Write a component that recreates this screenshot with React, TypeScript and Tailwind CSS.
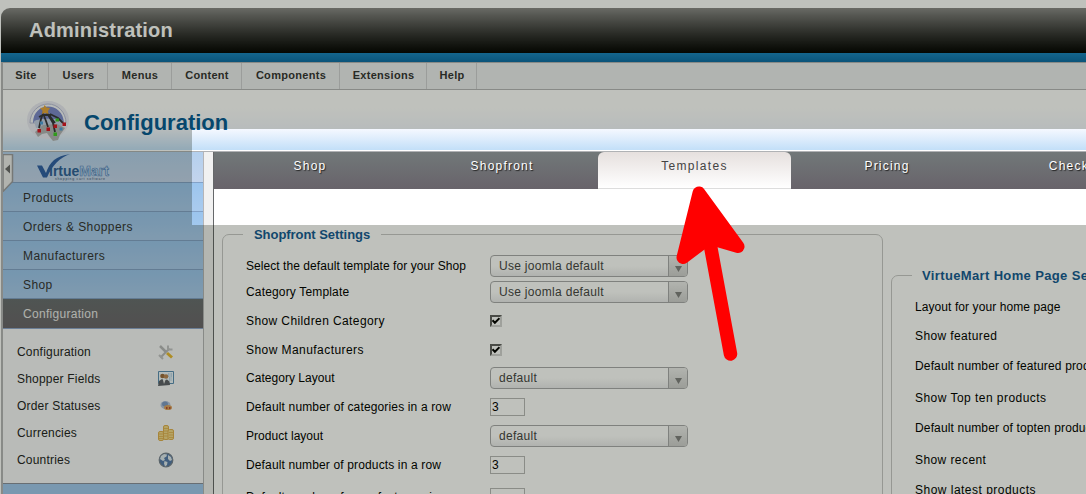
import React from "react";

type Field = { label: string; cls: string; h: string; kind?: "select" | "check" | "input"; value?: string };

const menu = [
  { t: "Site", w: "w-[46px]" },
  { t: "Users", w: "w-[59px]" },
  { t: "Menus", w: "w-[64px]" },
  { t: "Content", w: "w-[70px]" },
  { t: "Components", w: "w-[98px]" },
  { t: "Extensions", w: "w-[87px]" },
  { t: "Help", w: "w-[50px]" },
];

const nav = ["Products", "Orders & Shoppers", "Manufacturers", "Shop"];

const tabs = ["Shop", "Shopfront", "Templates", "Pricing", "Checkout"];

const left: Field[] = [
  { label: "Select the default template for your Shop", cls: "tracking-[0.06px]", h: "h-[26px]", kind: "select", value: "Use joomla default" },
  { label: "Category Template", cls: "tracking-[0.16px]", h: "h-[26px]", kind: "select", value: "Use joomla default" },
  { label: "Show Children Category", cls: "tracking-[0.4px]", h: "h-[32px]", kind: "check" },
  { label: "Show Manufacturers", cls: "tracking-[0.44px]", h: "h-[26px]", kind: "check" },
  { label: "Category Layout", cls: "tracking-[0.03px]", h: "h-[30px]", kind: "select", value: "default" },
  { label: "Default number of categories in a row", cls: "tracking-[0.15px]", h: "h-[28px]", kind: "input", value: "3" },
  { label: "Product layout", cls: "tracking-[0.03px]", h: "h-[30px]", kind: "select", value: "default" },
  { label: "Default number of products in a row", cls: "tracking-[0.14px]", h: "h-[28px]", kind: "input", value: "3" },
  { label: "Default number of manufacturers in a row", cls: "tracking-[0.14px]", h: "h-[36px]", kind: "input" },
];

const right: Field[] = [
  { label: "Layout for your home page", cls: "tracking-[0.08px]", h: "h-[28px]" },
  { label: "Show featured", cls: "tracking-[0.38px]", h: "h-[30px]" },
  { label: "Default number of featured products", cls: "tracking-[0.15px]", h: "h-[30px]" },
  { label: "Show Top ten products", cls: "tracking-[0.46px]", h: "h-[34px]" },
  { label: "Default number of topten products", cls: "tracking-[0.15px]", h: "h-[26px]" },
  { label: "Show recent", cls: "tracking-[0.42px]", h: "h-[38px]" },
  { label: "Show latest products", cls: "tracking-[0.48px]", h: "h-[22px]" },
];

function Control({ f }: { f: Field }) {
  if (f.kind === "select")
    return (
      <div className="flex h-[22px] w-[198px] overflow-hidden rounded-[4px] border border-[#a9a9ab] bg-linear-to-b from-white from-50% to-[#ececee]">
        <span className="flex-1 pl-2 text-[12px] leading-[20px] tracking-[0.3px] text-[#444]">{f.value}</span>
        <span className="flex w-[19px] items-center justify-center border-l border-[#a9a9ab] bg-linear-to-b from-[#ededed] to-[#cfcfcf] pt-[5px]">
          <svg width="7" height="6"><path d="M0 0h7L3.5 6z" fill="#808080" /></svg>
        </span>
      </div>
    );
  if (f.kind === "check")
    return (
      <div className="flex size-[12px] items-center justify-center border-2 border-t-[#606060] border-r-[#d4d4d4] border-b-[#d4d4d4] border-l-[#606060]">
        <svg width="8" height="8" className="shrink-0"><path d="M0.5 3.2l2.4 2.6L7.5 1.2" fill="none" stroke="#000" strokeWidth="2" /></svg>
      </div>
    );
  return <div className="h-[18px] w-[35px] border border-[#b8b8b8] pl-px text-[12px] leading-[16px] text-black">{f.value}</div>;
}

function Rows({ fields }: { fields: Field[] }) {
  return (
    <>
      {fields.map((f) => (
        <div key={f.label} className={`flex items-center whitespace-nowrap ${f.h}`}>
          <span className={`w-[244px] shrink-0 text-[12px] leading-4 text-black ${f.cls}`}>{f.label}</span>
          {f.kind && <Control f={f} />}
        </div>
      ))}
    </>
  );
}

function Emblem() {
  return (
    <svg width="44" height="44" viewBox="0 0 44 44" className="shrink-0">
      <ellipse cx="22" cy="21" rx="21" ry="19" fill="#e9e9f4" />
      <path d="M4 24a18 19 0 0 1 36 0z" fill="#f6f7fb" stroke="#b9bdd8" strokeWidth="1" />
      <path d="M7 24C7 2 37 2 38 24L32 20 12 21z" fill="#7c88cc" />
      <path d="M8 22c6-3 24-3 29 0l-1 6-26 1z" fill="#c3cfe6" />
      <path d="M9 33l3 5 4-3 5-1 2 3 4 5 5-1 2-5 5-7-8-4-14 1z" fill="#b2b4b6" />
      <path d="M18 12l-3 8-2 9M18 17l2 5 2 6M21 14l6 10 2 9M23 16l6 8M24 15l8 4 5 5M13 18l4-2h8" stroke="#35363c" strokeWidth="1.800" fill="none" />
      <path d="M18.500 6l2 2.500 3.500.5-2 3 .5 3-3.500-1-3 1 .5-3.500-2.500-2.500 3.500-.5z" fill="#e5a53a" />
      <path d="M11.500 30h3.500v3.500h-3.500zM20.500 28.500H24V32h-3.500zM27.500 25.500H31V29h-3.500zM36.500 23.500H40V27h-3.500z" fill="#dc1424" />
      <path d="M29.500 19.500H33v3h-3.500zM27.500 33.500h3.500V37h-3.500z" fill="#3fca26" />
      <path d="M14 22.500h3v3h-3zM33.500 28.500h3v3h-3z" fill="#4d9edb" />
    </svg>
  );
}

function Logo() {
  return (
    <svg width="78" height="28" viewBox="0 0 78 28" fontFamily="'Liberation Sans',Arial,sans-serif" fontWeight="bold">
      <path d="M0 11.500h5L9 19C12.500 8.500 19 1.500 33 .3 23 3.300 15 11.500 10 23.500H6z" fill="#2f5fa6" />
      <text x="12" y="22" fontSize="14">
        <tspan fill="#2f6099">irtue</tspan>
        <tspan fill="#bcd6f4" stroke="#4f7fb8" strokeWidth=".6">Mart</tspan>
      </text>
      <text x="18" y="26.300" fontSize="3.500" fontWeight="normal" textLength="50" fill="#3d5273">shopping cart software</text>
    </svg>
  );
}

function ToolsIcon() {
  return (
    <svg width="16" height="16" viewBox="0 0 16 16" fill="none">
      <path d="M2.500 13.500l9-9" stroke="#b9b9bc" strokeWidth="2" />
      <path d="M10 1.500v4h4.500M1 11l4 4" stroke="#c2c2c5" strokeWidth="2" />
      <path d="M2 2l6 6" stroke="#b8b8ba" strokeWidth="2.500" />
      <path d="M9 9l5 4.500" stroke="#e8b932" strokeWidth="3" />
    </svg>
  );
}

function FieldsIcon() {
  return (
    <svg width="16" height="16" viewBox="0 0 16 16">
      <path d="M.5.5h15v12H.5z" fill="#eef6fb" stroke="#5c8db4" />
      <path d="M10 3h4M10 5h4M11 7h3M11 9h3" stroke="#8fb6d8" strokeDasharray="1.500 1" />
      <circle cx="4.500" cy="5" r="2.300" fill="#9a6a3d" />
      <circle cx="8" cy="5.500" r="2.300" fill="#b98554" />
      <path d="M0 15l1-5 3-2 2 1.500 3-1 2.500 2 .5 3.500z" fill="#5d6069" />
      <path d="M5 9l1 4 1.500-4z" fill="#eee" />
    </svg>
  );
}

function StatusIcon() {
  return (
    <svg width="16" height="16" viewBox="0 0 16 16">
      <ellipse cx="7.500" cy="7" rx="5" ry="4" fill="#b4c4e0" />
      <ellipse cx="7" cy="6" rx="3" ry="2.500" fill="#7f9bc6" />
      <ellipse cx="10" cy="9.500" rx="4" ry="2.600" fill="#dda15f" />
      <path d="M8 9h1.500v2H8zM11 9h1.500v2H11z" fill="#b54c31" />
    </svg>
  );
}

function CoinsIcon() {
  return (
    <svg width="16" height="16" viewBox="0 0 16 16" fill="#f2d88a" stroke="#dfae50">
      <rect x="5.500" y=".5" width="5" height="14" rx="1.500" />
      <rect x=".5" y="6.500" width="5" height="9" rx="1.500" />
      <rect x="10" y="4.500" width="5.500" height="10" rx="1.500" />
      <path d="M6 3.500h4M6 6h4M6 8.500h4M6 11h4M1 9h4M1 11.500h4M1 13.500h4M11 7.500h4M11 10h4M11 12.500h4" strokeWidth=".8" />
    </svg>
  );
}

function GlobeIcon() {
  return (
    <svg width="16" height="16" viewBox="0 0 16 16">
      <circle cx="8" cy="8" r="6.800" fill="#5579ab" stroke="#77818f" strokeWidth="1.200" />
      <path d="M3 4l3-2 3 .5-.5 2L6 6l1 2-2 1-3-2zM10 3l3 2 1 3-2 1-2-2zM6.500 9l3 1-.5 3-2 1.500-1-3z" fill="#dfe8ef" />
    </svg>
  );
}

const sub = [
  { t: "Configuration", I: ToolsIcon },
  { t: "Shopper Fields", I: FieldsIcon },
  { t: "Order Statuses", I: StatusIcon },
  { t: "Currencies", I: CoinsIcon },
  { t: "Countries", I: GlobeIcon },
];

function Sidebar() {
  return (
    <aside className="relative w-[201px] shrink-0 border-r border-[#b5b5b8] bg-[#a0c8ef]">
      <div className="h-[31px] border-b border-[#83a2c8] bg-linear-to-b from-[#b4d0ee] to-[#c3d4ec] pt-[2px] pl-[34px]">
        <Logo />
      </div>
      <div className="absolute top-[2px] left-0">
        <svg width="12" height="38" viewBox="0 0 12 38">
          <path d="M0 .5h9.500v27L0 37.500z" fill="#ececec" stroke="#9c9ca0" strokeWidth="1.500" />
          <path d="M7 10.500v9l-5-4.500z" fill="#6a6a6c" />
        </svg>
      </div>
      {nav.map((n) => (
        <div key={n} className="h-[29px] border-b border-[#83a2c8] bg-linear-to-b from-[#9bc5ee] to-[#aacbee] pl-5 text-[12px] leading-[30px] tracking-[0.42px] text-[#333]">{n}</div>
      ))}
      <div className="h-[29px] bg-linear-to-b from-[#686d71] to-[#6b656c] pl-5 text-[12px] leading-[30px] tracking-[0.3px] text-[#e9e9e9]">Configuration</div>
      <div className="h-[156px] border-t border-b border-t-[#8fa6cd] border-b-[#8a8f9c] bg-[#f7f7fa] pt-[9px] pl-[14px]">
        {sub.map(({ t, I }) => (
          <div key={t} className="flex h-[27px] items-center text-[12px] text-[#222]">
            <span className="w-[141px] tracking-[0.2px]">{t}</span>
            <I />
          </div>
        ))}
      </div>
    </aside>
  );
}

const box = "m-0 min-w-0 rounded-[7px] border border-[#c8c8c8] px-0";

export default function App() {
  return (
    <div className="relative flex h-[494px] w-[1086px] flex-col overflow-hidden bg-white pt-2 pl-px font-['Liberation_Sans',Arial,sans-serif]">
      <header className="h-[45px] shrink-0 rounded-tl-[9px] bg-linear-to-b from-[#8a8989] to-[#040404] pl-7 text-[20px] leading-[44px] font-bold tracking-[0.2px] text-white">Administration</header>
      <div className="h-[9px] shrink-0 bg-linear-to-b from-[#1783bf] to-[#0a6ba5]" />
      <nav className="flex h-[28px] shrink-0 border-t border-b border-l-2 border-[#b5b5b8] bg-[#edeef0]">
        {menu.map((m) => (
          <span key={m.t} className={`flex shrink-0 items-center justify-center border-r border-[#cfcfd2] pb-px pl-px text-[11px] font-bold tracking-[0.3px] text-[#333] ${m.w}`}>{m.t}</span>
        ))}
      </nav>
      <div className="flex min-h-0 flex-1 flex-col border-l-2 border-[#b5b5b8]">
        <div className="flex h-[62px] shrink-0 rounded-tl-[5px] border-b border-[#b0b2b5] bg-linear-to-b from-[#ffffff] from-30% via-[#f5f8ff] via-64% to-[#c0def8] pt-[9px] pl-[23px] shadow-[inset_0_-1px_0_#fff]">
          <Emblem />
          <h1 className="pl-[14px] text-[22px] leading-[47px] font-bold text-[#055a94]">Configuration</h1>
        </div>
        <div className="flex min-h-0 flex-1">
          <Sidebar />
          <div className="w-[9px] shrink-0 bg-[#f1f1f1]" />
          <main className="flex min-w-0 flex-1 flex-col border-l border-[#66686a]">
            <div className="flex h-[37px] shrink-0 bg-linear-to-b from-[#717879] to-[#68636a]">
              {tabs.map((t) =>
                t === "Templates" ? (
                  <div key={t} className="w-[193px] shrink-0 rounded-t-[6px] border-b border-[#ddd] bg-linear-to-b from-[#e6e0de] to-white text-center text-[12px] leading-[28px] tracking-[1.3px] text-[#444]">{t}</div>
                ) : (
                  <div key={t} className="w-[192px] shrink-0 text-center text-[12px] leading-[28px] tracking-[1.2px] text-white [text-shadow:1px_1px_1px_#222]">{t}</div>
                ),
              )}
            </div>
            <div className="flex min-h-0 flex-1 items-start bg-white pt-[37px] pl-2">
              <fieldset className={`${box} h-[400px] w-[661px] shrink-0`}>
                <legend className="ml-5 px-[11px] text-[13px] leading-[17px] font-bold tracking-[-0.05px] text-[#145a94]">Shopfront Settings</legend>
                <div className="pt-[10px] pl-[23px]">
                  <Rows fields={left} />
                </div>
              </fieldset>
              <fieldset className={`${box} mt-[41px] ml-2 h-[400px] w-[661px] shrink-0`}>
                <legend className="ml-5 px-[10px] text-[13px] leading-[17px] font-bold tracking-[0.36px] text-[#145a94]">VirtueMart Home Page Settings</legend>
                <div className="pt-[9px] pl-[23px]">
                  <Rows fields={right} />
                </div>
              </fieldset>
            </div>
          </main>
        </div>
      </div>
      <div className="pointer-events-none absolute top-[129px] left-[192px] h-[96px] w-[900px] shadow-[0_0_0_1200px_rgba(12,20,0,0.262)]" />
      <svg className="absolute top-[180px] left-[670px]" width="80" height="186" viewBox="670 180 80 186">
        <path d="M699 193L683 257.500 709 238 738 246.500z" fill="#f00" stroke="#f00" strokeWidth="13" strokeLinejoin="round" />
        <path d="M709 238L730.500 354" stroke="#f00" strokeWidth="13.500" strokeLinecap="round" />
      </svg>
    </div>
  );
}
